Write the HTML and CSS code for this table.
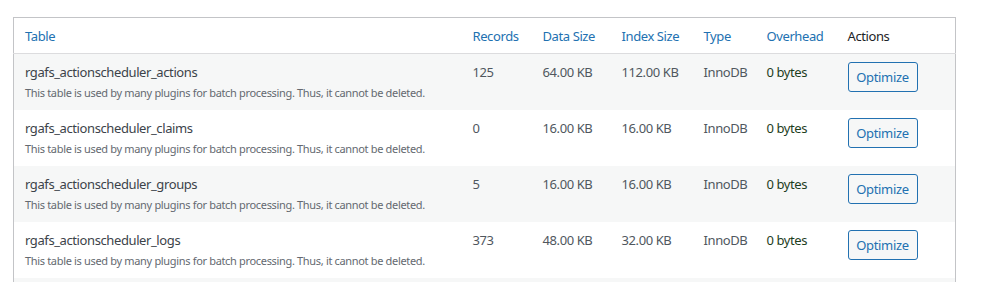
FILE: index.html
```html
<!DOCTYPE html>
<html lang="en">
<head>
    <meta charset="UTF-8">
    <title>Database Tables</title>
    <link rel="stylesheet" href="styles.css">
</head>
<body>
    <div class="wrap">
        <table class="tables-list">
            <colgroup>
                <col class="col-name">
                <col class="col-records">
                <col class="col-data">
                <col class="col-index">
                <col class="col-type">
                <col class="col-overhead">
                <col class="col-actions">
            </colgroup>
            <thead>
                <tr>
                    <th><a href="#">Table</a></th>
                    <th><a href="#">Records</a></th>
                    <th><a href="#">Data Size</a></th>
                    <th><a href="#">Index Size</a></th>
                    <th><a href="#">Type</a></th>
                    <th><a href="#">Overhead</a></th>
                    <th>Actions</th>
                </tr>
            </thead>
            <tbody>
                <tr>
                    <td>
                        <div class="name">rgafs_actionscheduler_actions</div>
                        <div class="note">This table is used by many plugins for batch processing. Thus, it cannot be deleted.</div>
                    </td>
                    <td>125</td>
                    <td>64.00 KB</td>
                    <td>112.00 KB</td>
                    <td>InnoDB</td>
                    <td class="overhead">0 bytes</td>
                    <td class="actions"><button class="button">Optimize</button></td>
                </tr>
                <tr>
                    <td>
                        <div class="name">rgafs_actionscheduler_claims</div>
                        <div class="note">This table is used by many plugins for batch processing. Thus, it cannot be deleted.</div>
                    </td>
                    <td>0</td>
                    <td>16.00 KB</td>
                    <td>16.00 KB</td>
                    <td>InnoDB</td>
                    <td class="overhead">0 bytes</td>
                    <td class="actions"><button class="button">Optimize</button></td>
                </tr>
                <tr>
                    <td>
                        <div class="name">rgafs_actionscheduler_groups</div>
                        <div class="note">This table is used by many plugins for batch processing. Thus, it cannot be deleted.</div>
                    </td>
                    <td>5</td>
                    <td>16.00 KB</td>
                    <td>16.00 KB</td>
                    <td>InnoDB</td>
                    <td class="overhead">0 bytes</td>
                    <td class="actions"><button class="button">Optimize</button></td>
                </tr>
                <tr>
                    <td>
                        <div class="name">rgafs_actionscheduler_logs</div>
                        <div class="note">This table is used by many plugins for batch processing. Thus, it cannot be deleted.</div>
                    </td>
                    <td>373</td>
                    <td>48.00 KB</td>
                    <td>32.00 KB</td>
                    <td>InnoDB</td>
                    <td class="overhead">0 bytes</td>
                    <td class="actions"><button class="button">Optimize</button></td>
                </tr>
                <tr class="cut">
                    <td colspan="7"></td>
                </tr>
            </tbody>
        </table>
    </div>
</body>
</html>
```

FILE: styles.css
```css
body {
    font-family: "Noto Sans", "Open Sans", sans-serif;
    font-size: 13px;
    letter-spacing: -0.4px;
    margin: 0;
    padding: 0;
    background-color: #ffffff;
    color: #50575e;
}
.wrap {
    padding: 17px 0 0 13px;
}
.tables-list {
    width: 942px;
    table-layout: fixed;
    border-collapse: collapse;
    border: 1px solid #c3c4c7;
    border-bottom: none;
}
.col-name { width: 448px; }
.col-records { width: 70px; }
.col-data { width: 79px; }
.col-index { width: 82px; }
.col-type { width: 63px; }
.col-overhead { width: 81px; }
.col-actions { width: 119px; }
.tables-list th {
    height: 35px;
    padding: 0 0 0 11px;
    text-align: left;
    font-weight: normal;
    font-size: 13px;
    color: #1d2327;
    border-bottom: 1px solid #dcdcde;
}
.tables-list th a {
    color: #2271b1;
    text-decoration: none;
}
.tables-list td {
    height: 56px;
    padding: 9px 0 0 11px;
    vertical-align: top;
    line-height: 18px;
    box-sizing: border-box;
}
.tables-list tbody tr:nth-child(odd) {
    background-color: #f6f7f7;
}
.tables-list tr.cut td {
    height: 4px;
    padding: 0;
}
.name {
    color: #3c434a;
}
.note {
    margin-top: 3px;
    font-size: 11px;
    letter-spacing: -0.33px;
    color: #646970;
}
.overhead {
    color: #1e3d1e;
}
.tables-list td.actions {
    padding-top: 8px;
}
.button {
    font-family: inherit;
    font-size: 13px;
    letter-spacing: -0.3px;
    color: #2271b1;
    background-color: #f6f7f7;
    border: 1px solid #2271b1;
    border-radius: 3px;
    width: 70px;
    height: 30px;
    padding: 0;
    cursor: pointer;
}
```
